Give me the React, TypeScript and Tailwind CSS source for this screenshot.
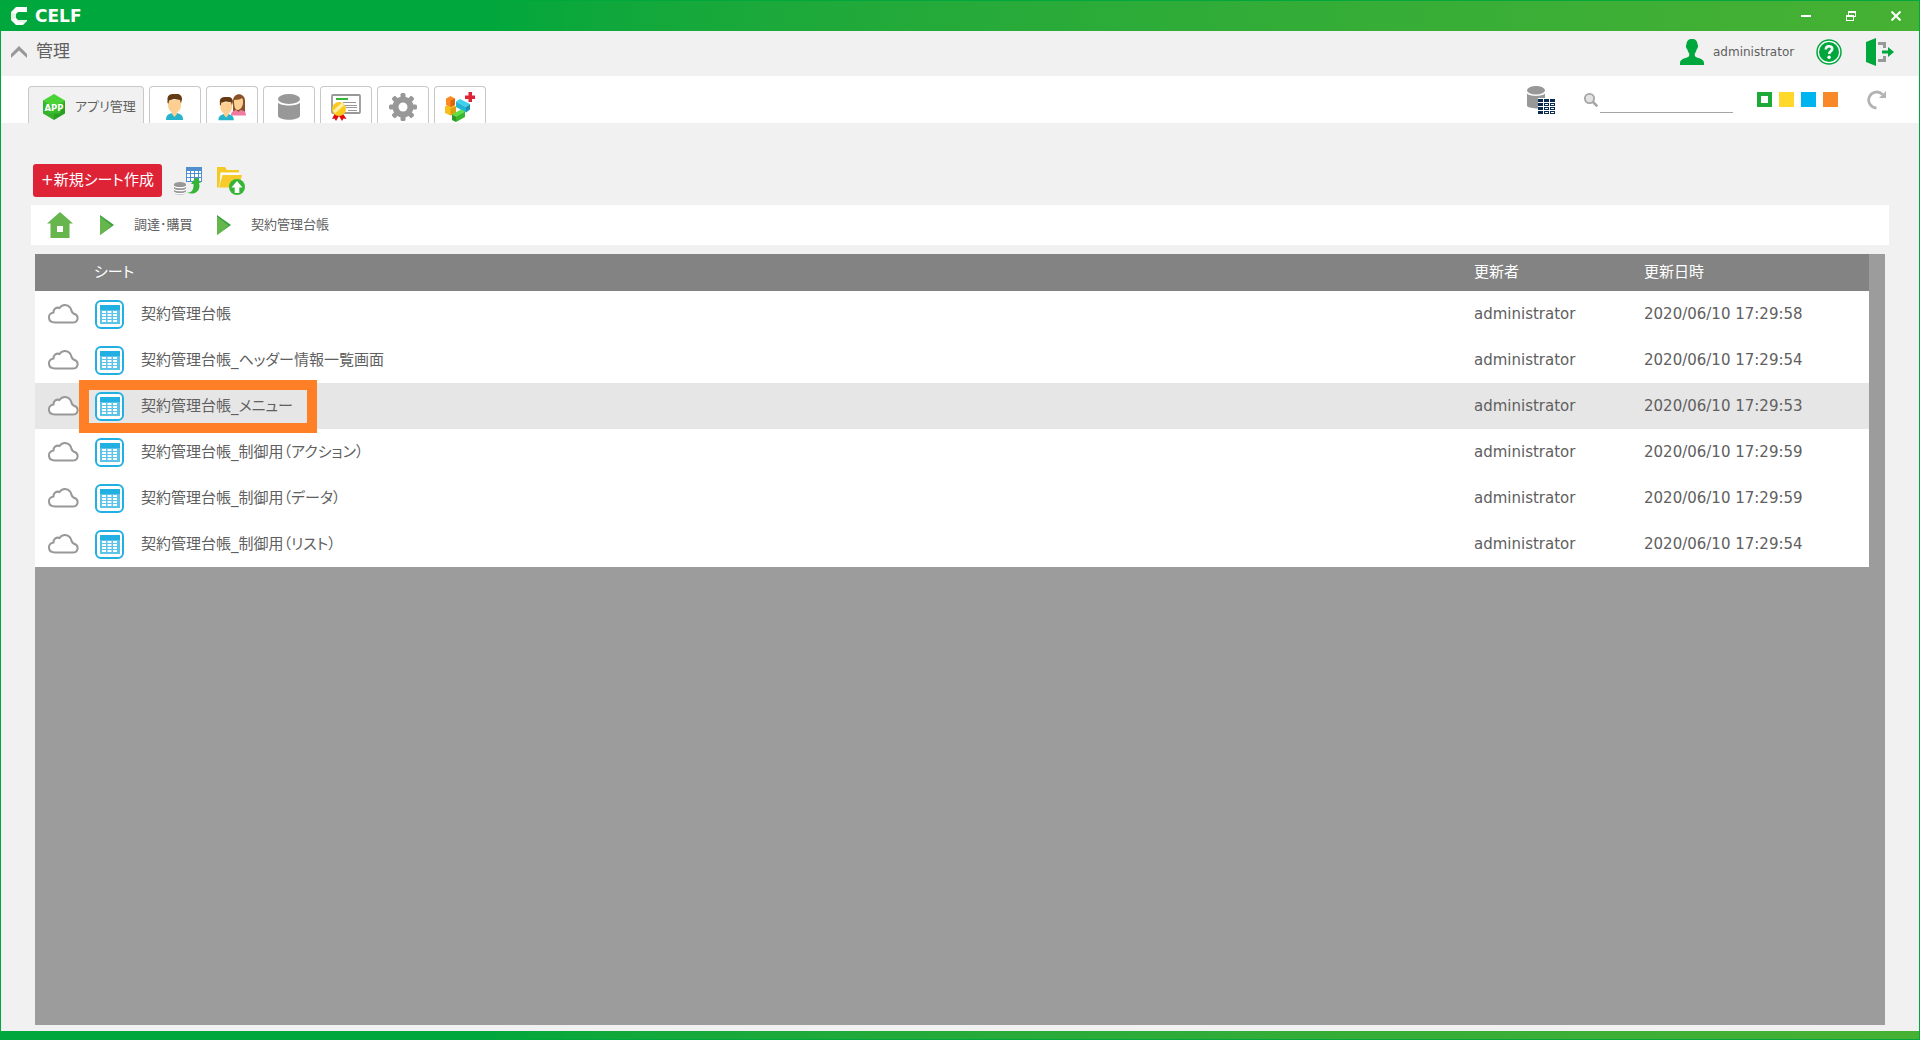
import type { ReactNode } from "react";

interface Sheet {
  name: string;
  updatedBy: string;
  updatedAt: string;
  selected?: boolean;
}

const SHEETS: Sheet[] = [
  { name: "契約管理台帳", updatedBy: "administrator", updatedAt: "2020/06/10 17:29:58" },
  { name: "契約管理台帳_ヘッダー情報一覧画面", updatedBy: "administrator", updatedAt: "2020/06/10 17:29:54" },
  { name: "契約管理台帳_メニュー", updatedBy: "administrator", updatedAt: "2020/06/10 17:29:53", selected: true },
  { name: "契約管理台帳_制御用（アクション）", updatedBy: "administrator", updatedAt: "2020/06/10 17:29:59" },
  { name: "契約管理台帳_制御用（データ）", updatedBy: "administrator", updatedAt: "2020/06/10 17:29:59" },
  { name: "契約管理台帳_制御用（リスト）", updatedBy: "administrator", updatedAt: "2020/06/10 17:29:54" },
];

const TABS: { label: string; icon: ReactNode }[] = [
  { label: "ユーザー", icon: <UserIcon /> },
  { label: "グループ", icon: <GroupIcon /> },
  { label: "データベース", icon: <DatabaseIcon /> },
  { label: "ライセンス", icon: <LicenseIcon /> },
  { label: "設定", icon: <GearIcon /> },
  { label: "アドオン", icon: <BlocksIcon /> },
];

export default function App() {
  return (
    <div className="flex min-h-screen flex-col border border-[#00a73c] bg-[#f1f1f1] font-['DejaVu_Sans','Noto_Sans_CJK_JP',sans-serif] text-[15px] text-[#606060] [font-feature-settings:'palt']">
      <TitleBar />
      <UserBar />
      <TabBar />
      <main className="flex flex-1 flex-col px-[30px] pt-[41px] pb-[6px]">
        <div className="ml-[2px] flex h-[33px] items-center">
          <button className="h-[33px] w-[129px] rounded-[3px] bg-[#de2337] whitespace-nowrap text-white">
            +新規シート作成
          </button>
          <button aria-label="データベースから作成" className="ml-3">
            <ImportIcon />
          </button>
          <button aria-label="アップロード" className="ml-[15px]">
            <UploadIcon />
          </button>
        </div>

        <nav className="mt-2 flex h-10 items-center bg-white pl-4 text-[13px]">
          <a href="#home" aria-label="ホーム">
            <svg className="h-[26px] w-[26px]" viewBox="0 0 26 26">
              <path fill="#67b64d" fillRule="evenodd" d="M13 0 26 11.5H22.5V26H3.500V11.500H0ZM10 14v6h6v-6Z" />
            </svg>
          </a>
          <Arrow />
          <a href="#procurement" className="w-[59px] whitespace-nowrap">調達･購買</a>
          <Arrow />
          <a href="#contracts">契約管理台帳</a>
        </nav>

        <div className="mx-1 mt-[9px] flex-1 bg-[#9c9c9c] pr-4">
          <SheetTable />
        </div>
      </main>
      <footer className="h-2 bg-linear-to-r from-[#00a73c] from-25% to-[#46b133]" />
    </div>
  );
}

function TitleBar() {
  return (
    <header className="flex h-[30px] items-center bg-linear-to-r from-[#00a73c] from-25% to-[#46b133] pl-[10px] text-white">
      <svg className="h-[18px] w-[17px]" viewBox="0 0 17 18">
        <path fill="#fff" d="M5 0H16V5H7L5 7V11L7 13H16V14L12 18H5L0 13V5Z" />
        <path fill="#bfe8cc" d="M0 5 5 7V11L0 13ZM7 13H16L14 16 5 14Z" opacity=".5" />
      </svg>
      <span className="ml-[7px] text-[17px] leading-none font-bold">CELF</span>
      <div className="ml-auto flex pr-px">
        <button aria-label="最小化" className="flex h-[30px] w-[45px] items-center justify-center">
          <svg className="h-[10px] w-[10px]" viewBox="0 0 10 10">
            <path fill="#fff" d="M0 4h10v2H0z" />
          </svg>
        </button>
        <button aria-label="元に戻す" className="flex h-[30px] w-[45px] items-center justify-center">
          <svg className="h-[10px] w-[10px]" viewBox="0 0 10 10" fill="#fff">
            <path fillRule="evenodd" d="M2 0h8v6H8V5h1V2H3v2H2ZM0 4h8v6H0ZM1 6v3h6V6Z" />
          </svg>
        </button>
        <button aria-label="閉じる" className="flex h-[30px] w-[45px] items-center justify-center">
          <svg className="h-[10px] w-[10px]" viewBox="0 0 10 10" stroke="#fff" strokeWidth="2">
            <path d="M.5.5l9 9M9.500.5l-9 9" />
          </svg>
        </button>
      </div>
    </header>
  );
}

function UserBar() {
  return (
    <div className="flex h-[45px] items-center pr-[25px] pb-1 pl-[10px]">
      <button aria-label="折りたたむ">
        <svg className="h-3 w-4" viewBox="0 0 16 12">
          <path d="M0 8 8 0l8 8v4L8 4.500 0 12Z" fill="#989898" />
        </svg>
      </button>
      <h1 className="ml-[9px] text-[17px]">管理</h1>
      <div className="ml-auto flex items-center">
        <svg className="h-[26px] w-6" viewBox="0 0 24 26" fill="#00a73c">
          <path d="M12 0C8.500 0 6.500 2 6.500 5.500 5.500 6 6 9.500 7.200 10c.5 2.500 1.300 3.500 2 4.300V17C7.500 19.500 0 19 0 24v2h24v-2c0-5-7.500-4.500-9.200-7v-2.700c.7-.8 1.500-1.800 2-4.300C18 9.500 18.500 6 17.500 5.500 17.500 2 15.500 0 12 0Z" />
        </svg>
        <span className="ml-[9px] w-[86px] text-xs">administrator</span>
        <button aria-label="ヘルプ" className="ml-[17px]">
          <svg className="h-[26px] w-[26px]" viewBox="0 0 26 26">
            <circle cx="13" cy="13" r="12" fill="#fff" stroke="#00a73c" strokeWidth="1.500" />
            <circle cx="13" cy="13" r="10" fill="#00a73c" />
            <path d="M9.800 10.500c0-4.300 6.400-4.300 6.400-.5 0 2.300-3 2.400-3 5" fill="none" stroke="#fff" strokeWidth="2.600" />
            <circle cx="13.100" cy="18.300" r="1.700" fill="#fff" />
          </svg>
        </button>
        <button aria-label="ログアウト" className="ml-6">
          <svg className="h-7 w-7" viewBox="0 0 28 28">
            <path fill="#00a73c" d="M0 4 10 0v28L0 24Z" />
            <path fill="#989898" d="M12 4h8v6h-3V7h-5ZM12 24h8v-6h-3v3h-5Z" />
            <path fill="#00a73c" d="M16 12.500h6V9l6 5-6 5v-3.500h-6Z" />
          </svg>
        </button>
      </div>
    </div>
  );
}

function TabBar() {
  return (
    <div className="flex h-[47px] items-end bg-white pr-8 pl-[27px]">
      <div role="tablist" className="flex gap-[5px]">
        <button
          role="tab"
          aria-selected="true"
          className="flex h-[37px] w-[116px] items-center rounded-t-[4px] border border-b-0 border-[#c8c8c8] bg-[#f1f1f1] pt-[3px] pl-[14px] text-[13px]"
        >
          <svg className="h-[26px] w-[22px]" viewBox="0 0 22 26">
            <path fill="#4ad335" d="M11 0 22 6.500 11 13 0 6.500Z" />
            <path fill="#35b02a" d="M0 6.500 11 13v13L0 19.500Z" />
            <path fill="#2a9e24" d="M22 6.500 11 13v13l11-6.500Z" />
            <path fill="#38bc2c" d="M0 6.500 11 13l11-6.500-5 13H5Z" />
            <text x="11" y="16.500" textAnchor="middle" fill="#fff" fontSize="8.500" fontWeight="bold" fontFamily="DejaVu Sans">
              APP
            </text>
          </svg>
          <span className="ml-[10px] whitespace-nowrap">アプリ管理</span>
        </button>
        {TABS.map((tab) => (
          <button
            key={tab.label}
            role="tab"
            aria-selected="false"
            aria-label={tab.label}
            className="flex h-[37px] w-[52px] items-center justify-center rounded-t-[4px] border border-b-0 border-[#c8c8c8] bg-white pt-[3px]"
          >
            {tab.icon}
          </button>
        ))}
      </div>

      <div className="ml-auto flex h-[47px] items-center">
        <button aria-label="テーブル一覧">
          <svg className="h-7 w-7" viewBox="0 0 28 28">
            <path fill="#989898" d="M0 7.500c2 3.200 16 3.200 18 0V12h-7v10.500C6 22.500 1 21.500 0 20Z" />
            <ellipse cx="9" cy="4.300" rx="9" ry="4.300" fill="#989898" />
            <path fill="#0b2a50" d="M11 13h5v3h-5zM17 13h5v3h-5zM23 13h5v3h-5zM11 17h5v3h-5zM17 17h5v3h-5zM23 17h5v3h-5zM11 21h5v3h-5zM17 21h5v3h-5zM23 21h5v3h-5zM11 25h5v3h-5zM17 25h5v3h-5zM23 25h5v3h-5z" />
            <path fill="#fff" d="M18 18h3v1h-3zM24 18h3v1h-3zM18 22h3v1h-3zM24 22h3v1h-3zM18 26h3v1h-3zM24 26h3v1h-3z" />
          </svg>
        </button>
        <label htmlFor="search" aria-label="検索" className="ml-[29px]">
          <svg className="h-[14px] w-[14px]" viewBox="0 0 14 14">
            <circle cx="5.500" cy="5.500" r="4.600" fill="#e3e3e3" stroke="#a5a5a5" strokeWidth="1.800" />
            <path d="m9 9 4.300 4.300" stroke="#a5a5a5" strokeWidth="2.500" />
          </svg>
        </label>
        <input id="search" type="text" className="ml-[2px] h-[27px] w-[133px] border-b border-[#a5a5a5] text-[13px] outline-none" />
        <div className="ml-6 flex gap-[7px]">
          <button aria-label="緑" className="h-[15px] w-[15px] border-4 border-[#1eaa39] bg-white" />
          <button aria-label="黄" className="h-[15px] w-[15px] bg-[#ffd829]" />
          <button aria-label="青" className="h-[15px] w-[15px] bg-[#00b4f0]" />
          <button aria-label="橙" className="h-[15px] w-[15px] bg-[#f88828]" />
        </div>
        <button aria-label="更新" className="ml-[29px]">
          <svg className="h-5 w-5" viewBox="0 0 20 20">
            <path d="M9.500 18A8 8 0 1 1 15.500 4.500" fill="none" stroke="#b3b3b3" strokeWidth="2.800" />
            <path d="M19 1v7h-7Z" fill="#b3b3b3" />
          </svg>
        </button>
      </div>
    </div>
  );
}

function SheetTable() {
  return (
    <table className="w-full table-fixed text-left">
      <thead className="bg-[#838383] text-white">
        <tr className="h-[37px]">
          <th className="w-[59px]" />
          <th className="font-normal">シート</th>
          <th className="w-[170px] font-normal">更新者</th>
          <th className="w-[225px] font-normal">更新日時</th>
        </tr>
      </thead>
      <tbody>
        {SHEETS.map((sheet) => (
          <tr key={sheet.name} className={`h-[46px] ${sheet.selected ? "bg-[#e6e6e6]" : "bg-white"}`}>
            <td className="pl-[13px]">
              <CloudIcon />
            </td>
            <td>
              <div className="relative flex h-[46px] items-center pl-px">
                <SheetIcon />
                <span className="ml-[17px]">{sheet.name}</span>
                {sheet.selected && (
                  <div className="absolute -top-[3px] -left-[15px] h-[53px] w-[238px] border-[10px] border-[#ff7f27]" />
                )}
              </div>
            </td>
            <td>{sheet.updatedBy}</td>
            <td>{sheet.updatedAt}</td>
          </tr>
        ))}
      </tbody>
    </table>
  );
}

function Arrow() {
  return (
    <svg className="mr-5 ml-[27px] h-5 w-[14px] nth-[n+3]:ml-6" viewBox="0 0 14 20">
      <path fill="#38a03c" d="M0 0 14 10 0 20Z" />
      <path fill="#67b64d" d="M0 1.500 11.500 10.500 1.500 19 0 20Z" />
    </svg>
  );
}

function CloudIcon() {
  return (
    <svg className="h-5 w-[31px]" viewBox="0 0 31 20">
      <path
        fill="#fff"
        stroke="#989898"
        strokeWidth="2"
        d="M7 18.500C-.8 18.500-.8 9.500 5.500 8.500 5.500 4.800 8.500 2.800 11.500 4 14.500-.8 22.500.2 23.500 7 24 8.200 24.500 9 26 9.800c5.500 1.800 4.500 8.700-1.500 8.700Z"
      />
    </svg>
  );
}

function SheetIcon() {
  return (
    <svg className="h-[29px] w-[29px] shrink-0" viewBox="0 0 29 29">
      <rect x="1" y="1" width="27" height="27" rx="5" fill="#fff" stroke="#22b0e2" strokeWidth="2" />
      <path fill="#22b0e2" d="M5 5h20v5H5z" />
      <path fill="#5cc4e9" d="M5 10h20v14H5z" />
      <path
        fill="#fff"
        d="M7 11h4v2H7zM12.500 11h4v2h-4zM18 11h4v2h-4zM7 14h4v2H7zM12.500 14h4v2h-4zM18 14h4v2h-4zM7 17h4v2H7zM12.500 17h4v2h-4zM18 17h4v2h-4zM7 20h4v2H7zM12.500 20h4v2h-4zM18 20h4v2h-4z"
      />
    </svg>
  );
}

function ImportIcon() {
  return (
    <svg className="block h-7 w-7" viewBox="0 0 28 28">
      <path fill="#4f8fd0" d="M12 0h16v15H12z" />
      <path fill="#fff" d="M13 4h3v2h-3zM17 4h3v2h-3zM21 4h3v2h-3zM25 4h2v2h-2zM13 7h3v3h-3zM17 7h3v3h-3zM21 7h3v3h-3zM25 7h2v3h-2zM13 11h3v3h-3zM17 11h3v3h-3zM25 11h2v3h-2z" />
      <path fill="#989898" d="M0 17v8.500c1 3 11 3 12 0V17Z" />
      <path fill="none" stroke="#fff" strokeWidth="1.200" d="M0 19c1 2.200 11 2.200 12 0M0 22c1 2.200 11 2.200 12 0M0 25c1 2.200 11 2.200 12 0" />
      <ellipse cx="6" cy="17.300" rx="6" ry="2.200" fill="#989898" />
      <path fill="#35b535" d="M12 25.500c6 1 8-3 7.500-8.500H17l5-7 5 5.500-2 .5c2 7-3 13-13 9.500Z" />
    </svg>
  );
}

function UploadIcon() {
  return (
    <svg className="block h-7 w-7" viewBox="0 0 28 28">
      <path fill="#f5c924" d="M0 0h8l2 3h12v4H5L1.500 20.500H0Z" />
      <path fill="#fff" d="M3.500 5.500h19v2h-17l-2.800 9Z" />
      <path fill="#f8cb2c" d="M5.500 8H25l-3.500 12.500H2Z" />
      <circle cx="20" cy="20" r="8" fill="#35b535" />
      <path fill="#fff" d="m20 14 5.500 6.500h-3.200V26h-4.600v-5.500h-3.200Z" />
    </svg>
  );
}

function UserIcon() {
  return (
    <svg className="h-7 w-7" viewBox="0 0 28 28">
      <Man />
    </svg>
  );
}

function Man() {
  return (
    <>
      <path fill="#27b4cb" d="M5 27c0-5 2-5.500 6-7h5c4 1.500 6 2 6 7Z" />
      <path fill="#fdd091" d="M11 17h5v4l-2.500 3L11 21Z" />
      <path fill="#fdd091" d="M7 7h13v5c0 4.500-3 8-6.500 8S7 16.500 7 12Z" />
      <path fill="#643a12" d="M6.500 10V5C7 2.500 9 1 12 1h4c3 0 5 2 5 5l-1 4.500-1-3.500-6-1-5 1.500-.5 3Z" />
    </>
  );
}

function GroupIcon() {
  return (
    <svg className="h-7 w-7" viewBox="0 0 28 28">
      <path fill="#8a5128" d="M15 8c0-9 12-9 12 0v11c-3 2-10 2-12 0Z" />
      <path fill="#fdd091" d="M16 7c4 0 7-1 8-2 2 2 1.500 11-4 12-3 0-4-3-4-10Z" />
      <path fill="#f07aa0" d="M13 22.500c0-5 4-5 5.500-5.500l2 2 2-2c3 .5 5.500 1 5.500 5.500Z" />
      <g transform="translate(-4 3) scale(.9)">
        <Man />
      </g>
    </svg>
  );
}

function DatabaseIcon() {
  return (
    <svg className="h-7 w-7" viewBox="0 0 28 28" fill="#989898">
      <ellipse cx="14" cy="6" rx="11" ry="5" />
      <path d="M3 9.500c2 4 20 4 22 0V23c-2 5-20 5-22 0Z" />
    </svg>
  );
}

function LicenseIcon() {
  return (
    <svg className="h-7 w-[30px]" viewBox="0 0 30 28">
      <rect x="1" y="2" width="28" height="18" rx="1" fill="#fff" stroke="#989898" strokeWidth="1.800" />
      <path fill="#35b535" d="M5 5h12v2H5z" />
      <path fill="#989898" d="M12 9h13v1H12zM14 12h12v1H14zM15 14h11v1H15zM17 17h9v1h-9z" />
      <path fill="#e20b12" d="m4 20-3 6 2.500-.5L5 28l3-5 3 5 1.500-2.500 3 .5-4-6Z" />
      <circle cx="8" cy="16" r="7" fill="#fcc81c" />
      <path stroke="#fff2a8" strokeWidth="3.500" d="m3 19 9-8" />
    </svg>
  );
}

function GearIcon() {
  return (
    <svg className="h-7 w-7" viewBox="0 0 28 28">
      <g fill="#989898">
        <rect x="11.500" width="5" height="28" rx="1.500" />
        <rect x="11.500" width="5" height="28" rx="1.500" transform="rotate(45 14 14)" />
        <rect x="11.500" width="5" height="28" rx="1.500" transform="rotate(90 14 14)" />
        <rect x="11.500" width="5" height="28" rx="1.500" transform="rotate(135 14 14)" />
        <circle cx="14" cy="14" r="10.500" />
      </g>
      <circle cx="14" cy="14" r="4.500" fill="#fff" />
    </svg>
  );
}

function BlocksIcon() {
  return (
    <svg className="h-[30px] w-[30px] shrink-0" viewBox="0 0 30 30">
      {/* yellow */}
      <path fill="#f6bf1d" d="M0 14.500 5.500 12l5.500 2.500V21l-5.500 2.500L0 21Z" />
      <path fill="#dd9f10" d="M5.500 16.500 11 14.500V21l-5.500 2.500Z" />
      {/* orange */}
      <path fill="#ff8a24" d="M1 6.500 5.500 4 10 6.500V13l-4.500 2L1 13Z" />
      <path fill="#dd650c" d="M5.500 8.500 10 6.500V13l-4.500 2Z" />
      {/* blue */}
      <path fill="#3fd0ee" d="m11 9.500 4-2.500 10 5-4 3Z" />
      <path fill="#22b4d6" d="m11 9.500 10 5.500v5.500L11 15Z" />
      <path fill="#1593b4" d="m21 15 4-3v5.500l-4 3Z" />
      {/* green */}
      <path fill="#5be045" d="m7 22.500 9-5 4 2-9 5Z" />
      <path fill="#35b82a" d="m11 24.500 9-5V25l-9 5Z" />
      <path fill="#2a9a22" d="m7 22.500 4 2V30l-4-2Z" />
      <path fill="#de2337" d="M23.500 0h3.500v3.500h3V7h-3v3h-3.500V7H20V3.500h3.500z" />
    </svg>
  );
}
